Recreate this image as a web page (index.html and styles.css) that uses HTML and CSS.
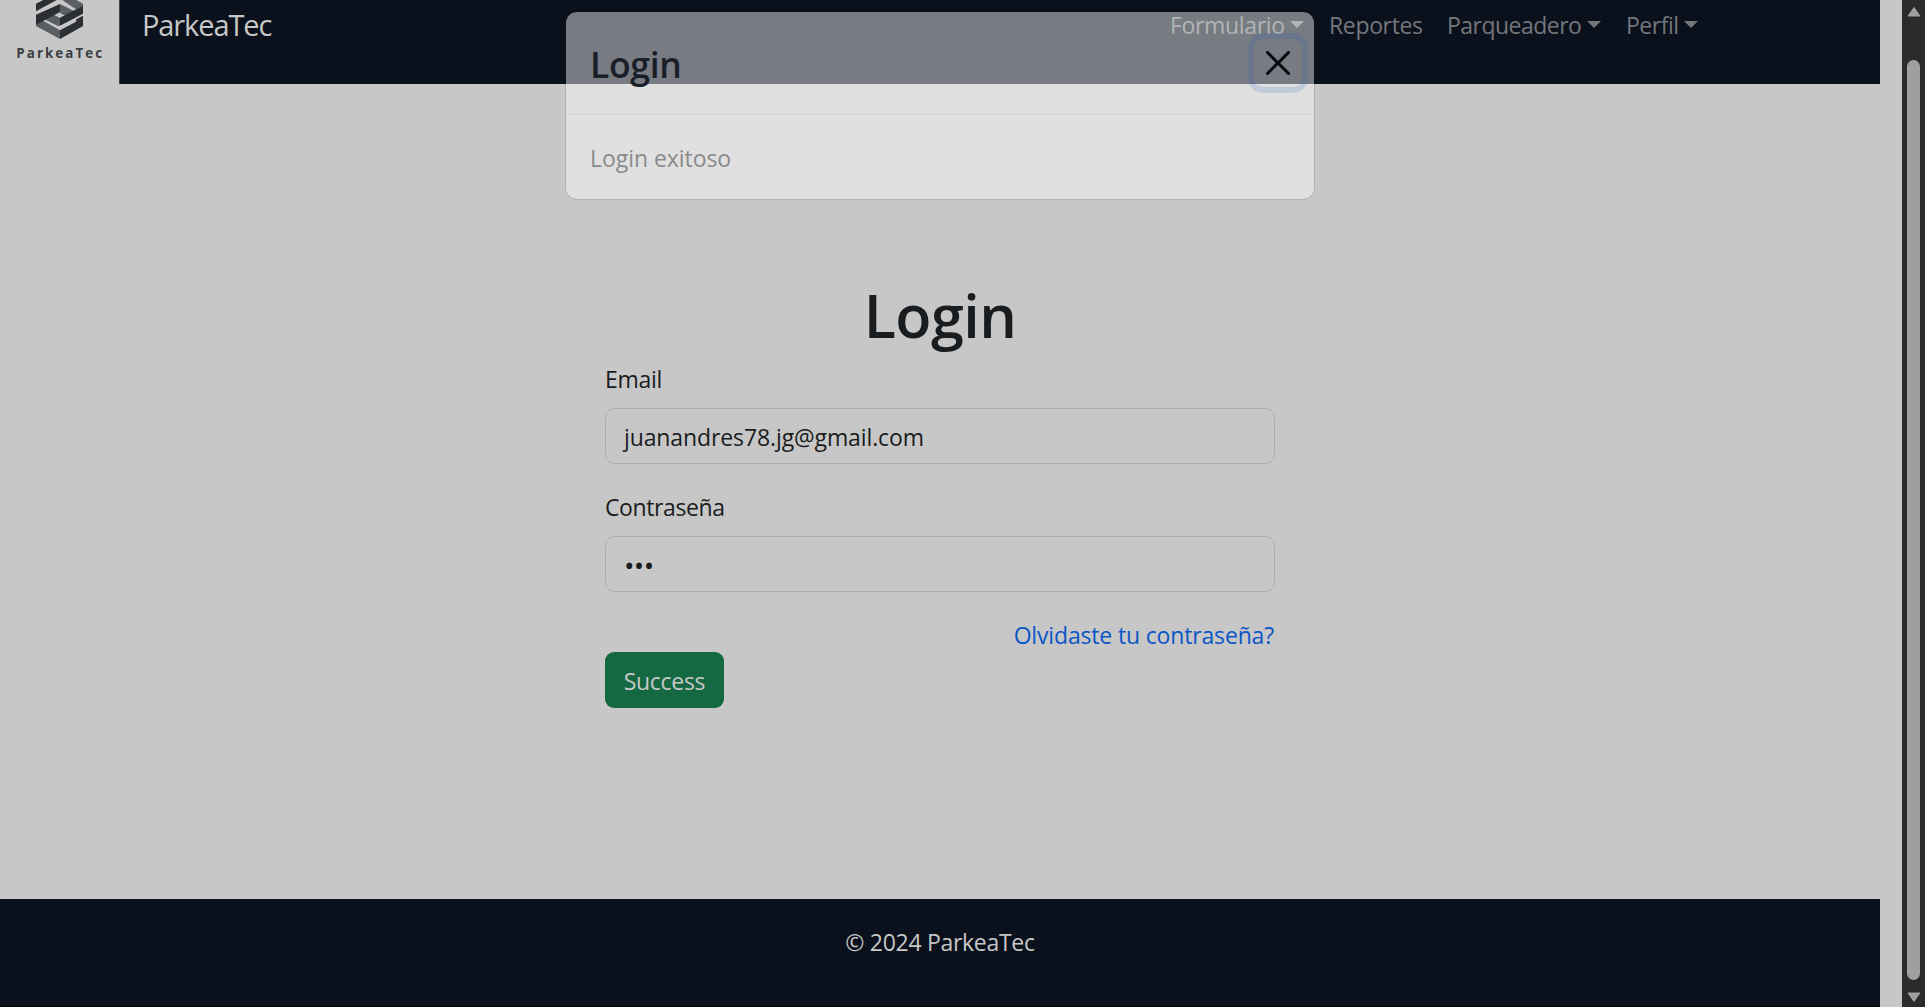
FILE: index.html
```html
<!DOCTYPE html>
<html lang="es">
<head>
<meta charset="utf-8">
<title>ParkeaTec</title>
<link rel="stylesheet" href="styles.css">
</head>
<body>
<div class="page">
  <header class="navbar">
    <div class="logo">
      <svg viewBox="0 0 357 252" role="img" aria-label="ParkeaTec">
        <g fill="#5a5d61">
          <path d="M187 0H229L249 11V18L228 28Z"/>
          <path d="M180 12 228 36 201 50 180 39Z"/>
          <path d="M132 57 159 43 180 54V77H172Z"/>
          <path d="M108 40 180 78 180 77 132 52ZM108 50 180 91V117L108 78Z"/>
        </g>
        <g fill="#2b2f34">
          <path d="M108 11 130 0H170L108 34Z"/>
          <path d="M108 44 180 12V36L108 74Z"/>
          <path d="M180 53 249 17V41L180 77Z"/>
          <path d="M180 91 228 65 229 58 249 47V78L180 117Z"/>
        </g>
        <text x="49" y="174" class="logo-text" textLength="257">ParkeaTec</text>
      </svg>
    </div>
    <a class="brand">ParkeaTec</a>
    <nav class="links">
      <a class="link w-form">Formulario<i class="caret"></i></a>
      <a class="link w-rep">Reportes</a>
      <a class="link w-park">Parqueadero<i class="caret"></i></a>
      <a class="link w-perf">Perfil<i class="caret"></i></a>
    </nav>
  </header>

  <main class="content">
    <form class="login">
      <h1 class="heading">Login</h1>
      <label class="label email-label">Email</label>
      <div class="control email">juanandres78.jg@gmail.com</div>
      <label class="label pass-label">Contraseña</label>
      <div class="control password">•••</div>
      <a class="forgot">Olvidaste tu contraseña?</a>
      <button class="submit" type="button">Success</button>
    </form>
  </main>

  <footer class="footer">© 2024 ParkeaTec</footer>

  <section class="modal">
    <div class="modal-header">
      <h2 class="modal-title">Login</h2>
      <button class="close" type="button" aria-label="Close">
        <svg viewBox="0 0 16 16"><path d="M.293.293a1 1 0 0 1 1.414 0L8 6.586 14.293.293a1 1 0 1 1 1.414 1.414L9.414 8l6.293 6.293a1 1 0 0 1-1.414 1.414L8 9.414l-6.293 6.293a1 1 0 0 1-1.414-1.414L6.586 8 .293 1.707a1 1 0 0 1 0-1.414z"/></svg>
      </button>
    </div>
    <div class="modal-body">Login exitoso</div>
  </section>
</div>
<aside class="scrollbar">
  <svg class="arrow" viewBox="0 0 14 11"><path d="M7 1 13 9.5H1Z"/></svg>
  <div class="thumb"></div>
  <svg class="arrow" viewBox="0 0 14 11"><path d="M7 10 13 1.5H1Z"/></svg>
</aside>
</body>
</html>
```
FILE: styles.css
```css
* { box-sizing: border-box; }
body {
  margin: 0;
  height: 1007px;
  display: flex;
  justify-content: space-between;
  overflow: hidden;
  background: #c7c7c7;
  color: #1a1d20;
  font: 400 23px/38px "Open Sans", "Noto Sans", sans-serif;
}
.page {
  position: relative;
  width: 1880px;
  height: 1007px;
  display: flex;
  flex-direction: column;
}
.navbar {
  height: 84px;
  display: flex;
  align-items: flex-start;
  background: #0b111c;
}
.logo {
  width: 120px;
  height: 84px;
  background: #c7c7c7;
  border-right: 1px solid #3d424b;
}
.logo svg { display: block; width: 119px; height: 84px; }
.logo-text {
  font: 700 40px "Open Sans", sans-serif;
  fill: #3a3e43;
}
.brand {
  margin: 2px 0 0 22px;
  font-size: 29px;
  line-height: 45px;
  letter-spacing: -1.1px;
  color: #c7c7c7;
}
.links {
  display: flex;
  gap: 24px;
  margin: 6px 182px 0 auto;
}
.link {
  display: flex;
  justify-content: space-between;
  padding-left: 1px;
  color: #73777c;
  letter-spacing: -.35px;
}
.w-form { width: 135px; }
.w-rep { width: 94px; }
.w-park { width: 155px; letter-spacing: -.52px; }
.w-perf { width: 73px; letter-spacing: -.5px; }
.caret {
  margin-top: 15px;
  width: 14px;
  height: 7px;
  background: currentColor;
  clip-path: polygon(0 0, 100% 0, 50% 100%);
}
.content {
  flex: 1;
  display: flex;
  justify-content: center;
  padding-top: 192px;
}
.login {
  width: 670px;
  display: flex;
  flex-direction: column;
}
.heading {
  margin: 0 0 12px;
  height: 72px;
  font-size: 59.3px;
  line-height: 78px;
  font-weight: 600;
  letter-spacing: -.55px;
  text-align: center;
}
.label { height: 36px; margin-bottom: 12px; }
.email-label { letter-spacing: -.3px; }
.pass-label { letter-spacing: -.4px; }
.control {
  height: 56px;
  margin-bottom: 24px;
  padding-left: 18px;
  border: 1px solid #acafb2;
  border-radius: 9px;
  line-height: 56px;
}
.email { letter-spacing: -.11px; }
.password { font-size: 28px; letter-spacing: -.7px; }
.forgot {
  height: 36px;
  align-self: flex-end;
  padding-right: 1px;
  color: #0a56c6;
  letter-spacing: -.16px;
}
.submit {
  width: 119px;
  height: 56px;
  padding: 0;
  border: 0;
  border-radius: 9px;
  background: #146943;
  color: #c7c7c7;
  font: inherit;
  line-height: 58px;
  letter-spacing: -.3px;
}
.footer {
  height: 108px;
  padding-top: 24px;
  border-bottom: 1px solid #05080d;
  background: #0b111c;
  color: #c7c7c7;
  letter-spacing: -.3px;
  text-align: center;
}
.modal {
  position: absolute;
  left: 565px;
  top: 11px;
  width: 750px;
  height: 189px;
  border: 1px solid rgba(0, 0, 0, .1);
  border-radius: 12px;
  background: rgba(255, 255, 255, .446);
  background-clip: padding-box;
}
.modal-header {
  height: 103px;
  padding: 0 12px 0 24px;
  display: flex;
  justify-content: space-between;
  border-bottom: 1px solid rgba(0, 0, 0, .06);
}
.modal-title {
  margin: 25px 0 0;
  font-size: 35.5px;
  line-height: 54px;
  font-weight: 600;
  letter-spacing: -.3px;
  color: #1a1e27;
}
.close {
  width: 48px;
  height: 48px;
  margin-top: 27px;
  padding: 12px;
  border: 0;
  border-radius: 9px;
  background: none;
  box-shadow: 0 0 0 6px rgba(13, 85, 200, .15);
}
.close svg { display: block; width: 24px; height: 24px; fill: #05080e; }
.modal-body { padding: 24px; color: #898a8b; letter-spacing: -.05px; }
.scrollbar {
  width: 23px;
  display: flex;
  flex-direction: column;
  align-items: center;
  padding: 6px 0 4px;
  background: #2b2b2b;
}
.arrow {
  width: 14px;
  height: 12px;
  fill: #9f9f9f;
  stroke: #9f9f9f;
  stroke-linejoin: round;
}
.thumb {
  flex: 1;
  width: 13px;
  margin: 42px 0 11px;
  border-radius: 7px;
  background: #9f9f9f;
}
```
